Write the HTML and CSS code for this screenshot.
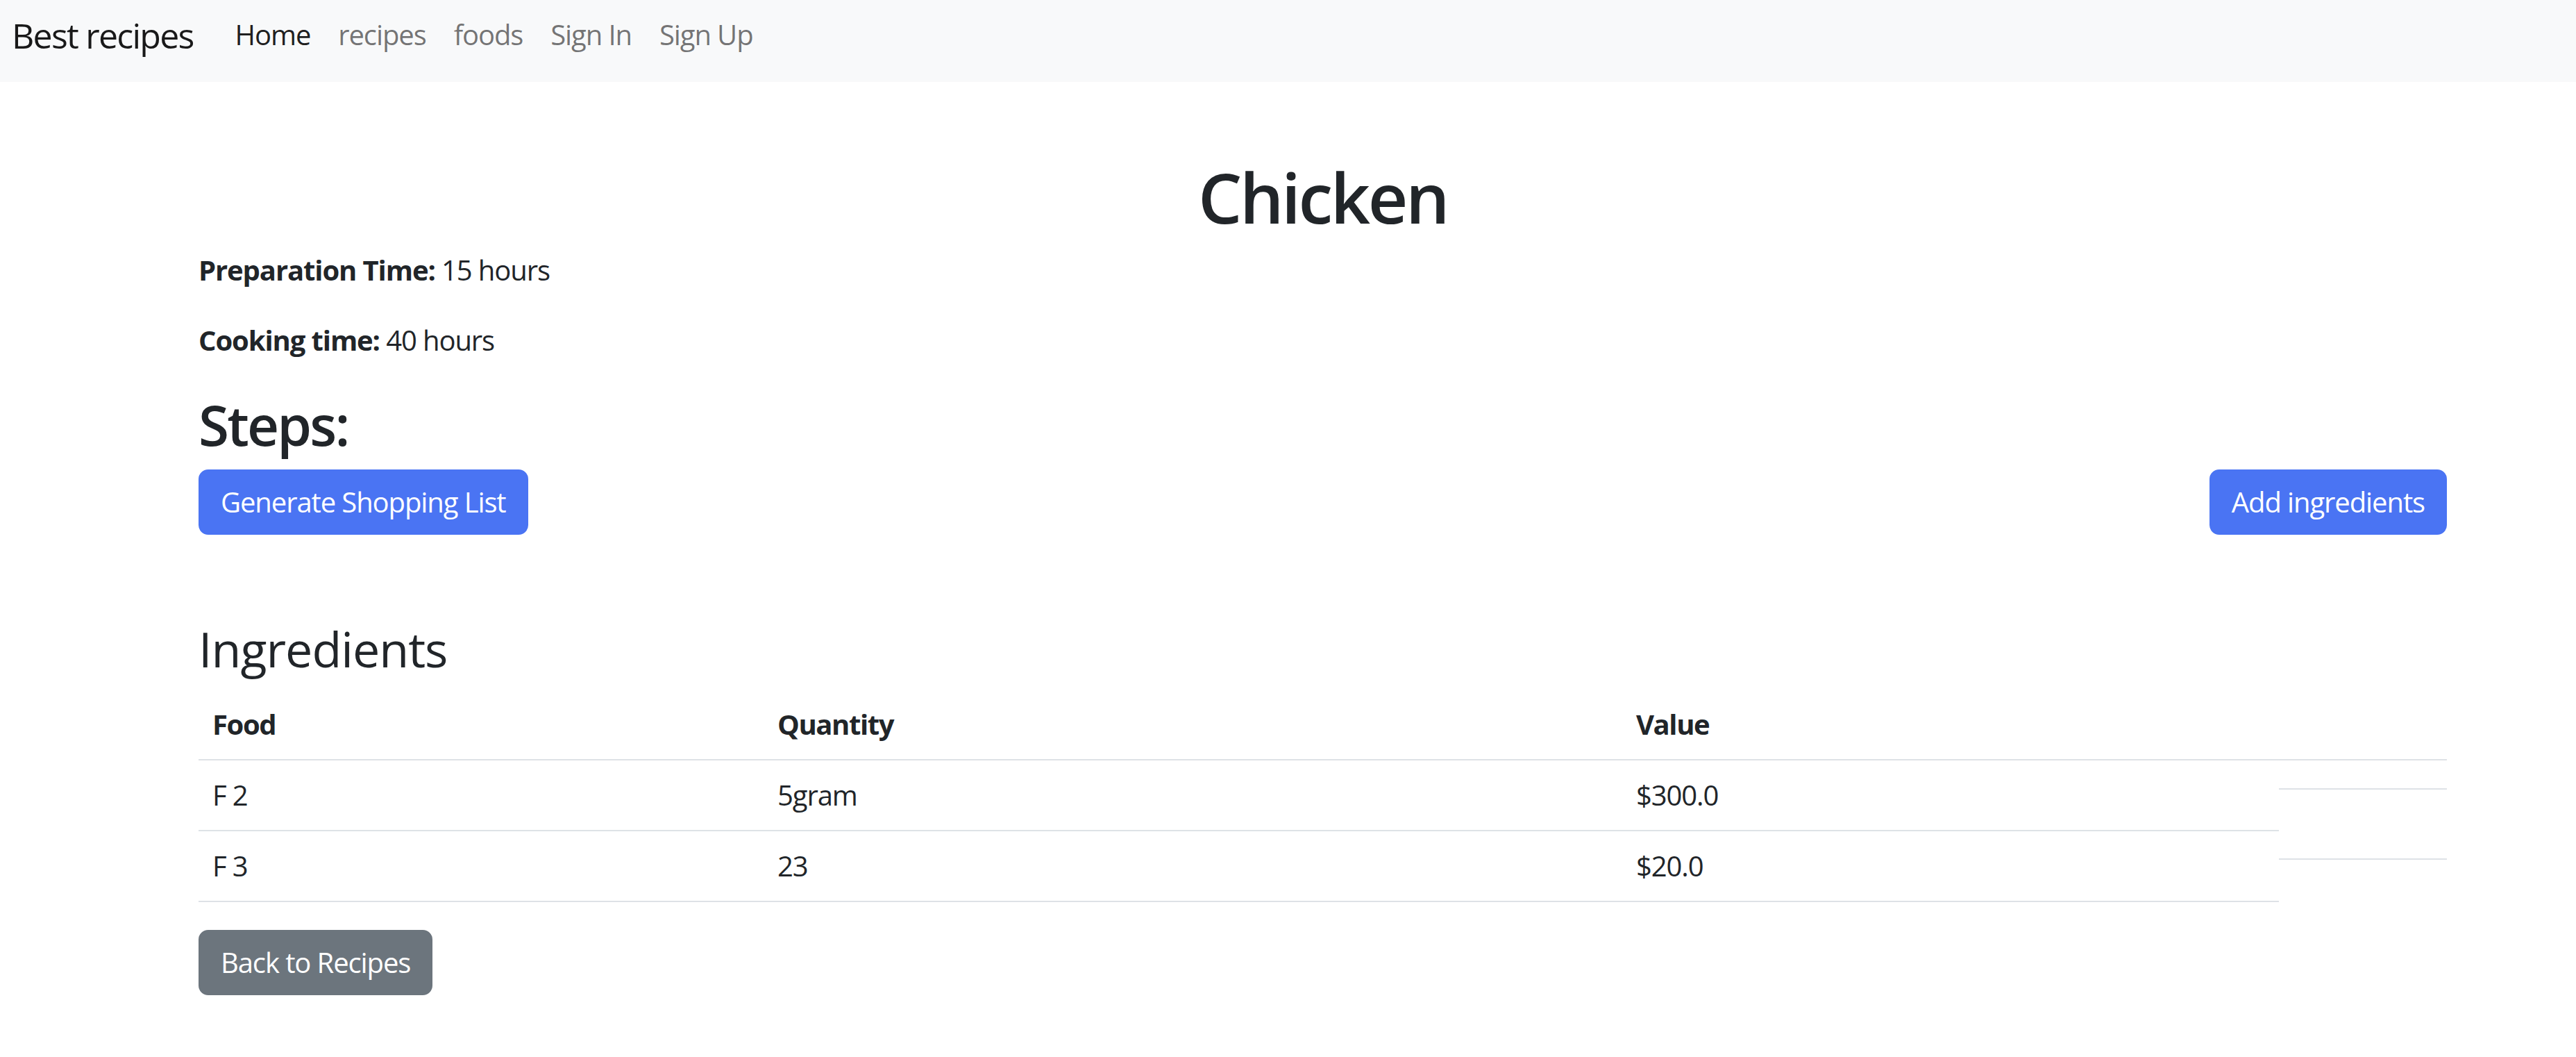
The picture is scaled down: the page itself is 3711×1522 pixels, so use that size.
FILE: index.html
```html
<!DOCTYPE html>
<html lang="en">
<head>
<meta charset="utf-8">
<title>Best recipes</title>
<link rel="stylesheet" href="styles.css">
</head>
<body>
<nav class="navbar">
  <a class="brand" href="#">Best recipes</a>
  <ul class="nav">
    <li><a class="nav-link active" href="#">Home</a></li>
    <li><a class="nav-link" href="#">recipes</a></li>
    <li><a class="nav-link" href="#">foods</a></li>
    <li><a class="nav-link" href="#">Sign In</a></li>
    <li><a class="nav-link" href="#">Sign Up</a></li>
  </ul>
</nav>
<main class="container">
  <h1 class="title">Chicken</h1>
  <p class="meta meta-prep"><strong>Preparation Time:</strong> 15 hours</p>
  <p class="meta meta-cook"><strong>Cooking time:</strong> 40 hours</p>
  <h2 class="steps">Steps:</h2>
  <div class="actions">
    <a class="btn btn-primary" href="#">Generate Shopping List</a>
    <a class="btn btn-primary" href="#">Add ingredients</a>
  </div>
  <h3 class="section-title">Ingredients</h3>
  <table class="table">
    <thead>
      <tr>
        <th class="col-food">Food</th>
        <th class="col-qty">Quantity</th>
        <th class="col-value">Value</th>
        <th class="col-extra"></th>
      </tr>
    </thead>
    <tbody>
      <tr>
        <td>F 2</td>
        <td>5gram</td>
        <td>$300.0</td>
        <td class="ghost"><div class="ghost-line"></div></td>
      </tr>
      <tr>
        <td>F 3</td>
        <td>23</td>
        <td>$20.0</td>
        <td class="ghost"><div class="ghost-line"></div></td>
      </tr>
    </tbody>
  </table>
  <a class="btn btn-secondary" href="#">Back to Recipes</a>
</main>
</body>
</html>
```

FILE: styles.css
```css
html, body {
  margin: 0;
  padding: 0;
  background: #ffffff;
}

body {
  font-family: "Open Sans", "Noto Sans", sans-serif;
  font-size: 40px;
  line-height: 1.5;
  letter-spacing: -1.1px;
  color: #212529;
}

a {
  text-decoration: none;
}

/* Navbar */
.navbar {
  display: flex;
  align-items: flex-start;
  height: 118px;
  background: #f8f9fa;
  padding-left: 17px;
  box-sizing: border-box;
}

.brand {
  font-size: 50px;
  line-height: 75px;
  letter-spacing: -1.75px;
  padding-top: 14px;
  margin-right: 40px;
  color: rgba(0, 0, 0, 0.9);
}

.nav {
  display: flex;
  list-style: none;
  margin: 0;
  padding: 0;
}

.nav-link {
  display: block;
  padding: 20px 20px 0;
  line-height: 60px;
  color: rgba(0, 0, 0, 0.55);
}

.nav-link.active {
  color: rgba(0, 0, 0, 0.9);
}

/* Main container */
.container {
  width: 3239px;
  margin: 0 0 0 286px;
}

.title {
  margin: 105px 0 16px;
  font-size: 100px;
  line-height: 120px;
  letter-spacing: -3.4px;
  font-weight: 600;
  text-align: center;
}

.meta {
  margin: 0;
}

.meta-prep {
  margin-bottom: 41px;
}

.meta-cook {
  margin-bottom: 43px;
}

.steps {
  margin: 0 0 17px;
  font-size: 80px;
  line-height: 96px;
  letter-spacing: -2.8px;
  font-weight: 600;
}

.actions {
  display: flex;
  justify-content: space-between;
}

.btn {
  display: inline-block;
  padding: 15px 30px;
  border: 2px solid transparent;
  border-radius: 14px;
  font-size: 40px;
  line-height: 60px;
  color: #ffffff;
}

.btn-primary {
  background: #4a74f3;
  border-color: #4a74f3;
}

.btn-secondary {
  background: #6c757d;
  border-color: #6c757d;
}

.section-title {
  margin: 122px 0 17px;
  font-size: 70px;
  line-height: 84px;
  letter-spacing: -1px;
  font-weight: 400;
}

/* Table */
.table {
  width: 3239px;
  border-collapse: collapse;
  margin-bottom: 40px;
  table-layout: fixed;
}

.table th,
.table td {
  box-sizing: border-box;
  padding: 20px;
  text-align: left;
  vertical-align: top;
  border-bottom: 2px solid #dee2e6;
  line-height: 60px;
}

.table th {
  font-weight: 700;
  letter-spacing: -1.4px;
}

.col-food { width: 814px; }
.col-qty { width: 1237px; }
.col-value { width: 946px; }
.col-extra { width: 242px; }

.table td.ghost {
  padding: 0;
  border-bottom: none;
}

.ghost-line {
  height: 40px;
  border-bottom: 2px solid #dee2e6;
}
```
